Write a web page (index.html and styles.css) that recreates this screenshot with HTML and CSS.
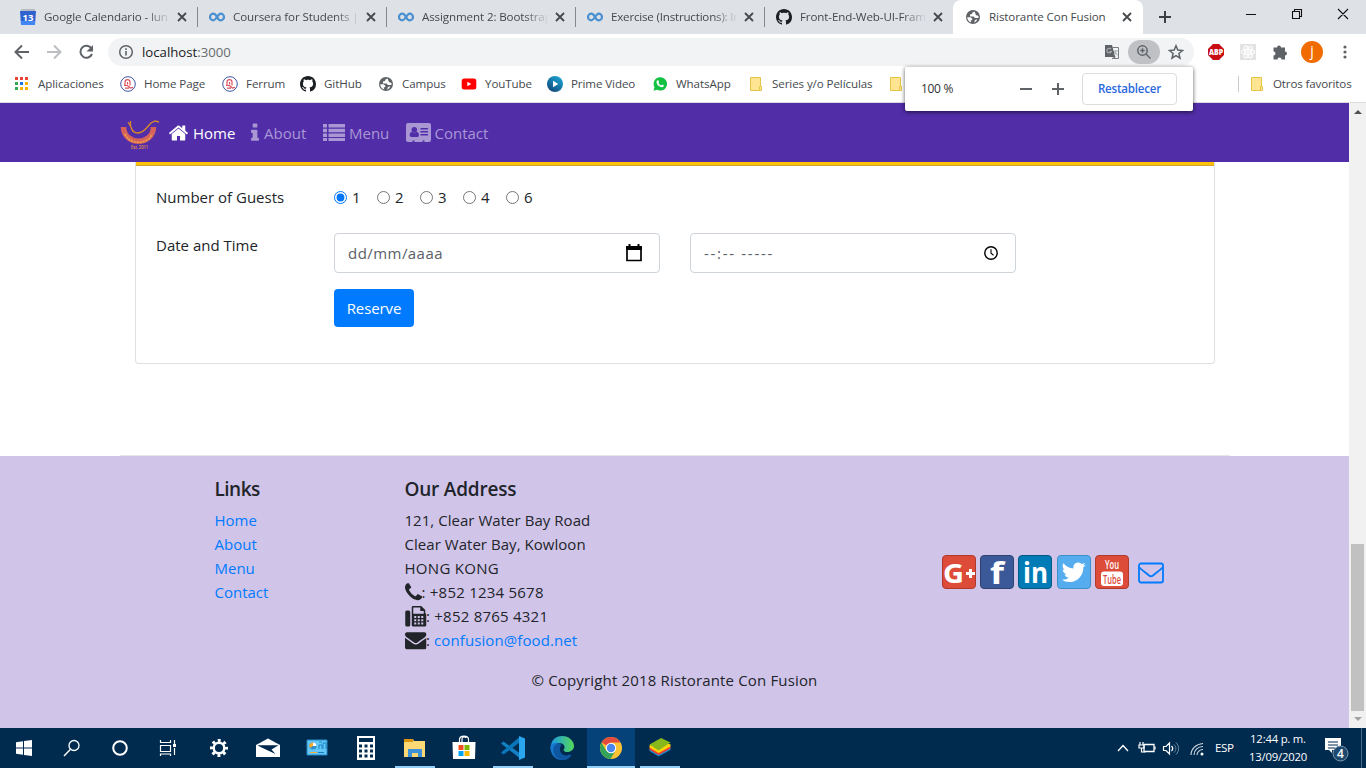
FILE: index.html
```html
<!DOCTYPE html>
<html lang="es">
<head>
<meta charset="utf-8">
<title>Ristorante Con Fusion</title>
<link rel="stylesheet" href="styles.css">
</head>
<body>
<svg class="defs" aria-hidden="true">
  <symbol id="infinity" viewBox="0 0 16 16"><path d="M8 8C6.700 5.500 5.700 4.700 4.300 4.700a3.300 3.300 0 0 0 0 6.600c3 0 4.400-6.600 7.400-6.600a3.300 3.300 0 0 1 0 6.600C10.300 11.300 9.300 10.500 8 8z" fill="none" stroke="#4a90d0" stroke-width="2.200"/></symbol>
  <symbol id="github" viewBox="0 0 16 16"><path fill="#1b1f23" d="M8 0C3.58 0 0 3.58 0 8c0 3.54 2.29 6.53 5.47 7.59.4.07.55-.17.55-.38 0-.19-.01-.82-.01-1.49-2.01.37-2.53-.49-2.69-.94-.09-.23-.48-.94-.82-1.13-.28-.15-.68-.52-.01-.53.63-.01 1.08.58 1.23.82.72 1.21 1.87.87 2.33.66.07-.52.28-.87.51-1.07-1.78-.2-3.64-.89-3.64-3.95 0-.87.31-1.59.82-2.15-.08-.2-.36-1.02.08-2.12 0 0 .67-.21 2.2.82.64-.18 1.32-.27 2-.27s1.36.09 2 .27c1.53-1.04 2.2-.82 2.2-.82.44 1.1.16 1.92.08 2.12.51.56.82 1.27.82 2.15 0 3.07-1.87 3.75-3.65 3.95.29.25.54.73.54 1.48 0 1.07-.01 1.93-.01 2.2 0 .21.15.46.55.38A8.01 8.01 0 0016 8c0-4.42-3.58-8-8-8z"/></symbol>
  <symbol id="globe" viewBox="0 0 16 16"><circle cx="8" cy="8" r="7" fill="#5f6368"/><path d="M9.500 2.500 7.500 3.500 7 5 5 5.500v2h3.500l1.500 1.500h3.300l.4-1.200-.9-1.300-1.800-.3-.6-1.700zM2.200 8.300h3.300l1.800 1.500v1l-1.600 1 .5 1.800A6 6 0 0 1 2.200 8.300zM10 11l2.200-.7-.7 1.700-2.500 1.800z" fill="#fff"/></symbol>
  <symbol id="close" viewBox="0 0 16 16"><path d="M4 4l8 8M12 4l-8 8" stroke="#45494d" stroke-width="1.800"/></symbol>
  <symbol id="crest" viewBox="0 0 16 16"><circle cx="8" cy="8" r="7.300" fill="#fff" stroke="#4055a0"/><path d="M5 9.500V6c0-3.200 5-3.200 5 0v3.500M7.500 8.500V6M4 9.500h3.500l3 2.500 2.500-.7M5 12.200h4" fill="none" stroke="#dc5260" stroke-width="1.200"/></symbol>
  <symbol id="folder" viewBox="0 0 16 16"><path d="M2.500 1.500h10v13h-10z" fill="#ffe592" stroke="#e5c448"/><path d="M11.500 10.500h2v4h-2z" fill="#ffe592" stroke="#e5c448"/></symbol>
  <symbol id="envelope" viewBox="0 0 1792 1792"><path d="M1792 710v794q0 66-47 113t-113 47h-1472q-66 0-113-47t-47-113v-794q44 49 101 87 362 246 497 345 57 42 92.500 65.500t94.500 48 110 24.500h2q51 0 110-24.500t94.500-48 92.500-65.500q170-123 498-345 57-39 100-87zm0-294q0 79-49 151t-122 123q-376 261-468 325-10 7-42.500 31t-54 38-52 32.500-57.500 27-50 9h-2q-23 0-50-9t-57.500-27-52-32.500-54-38-42.500-31q-91-64-262-182.500t-205-142.500q-62-42-117-115.500t-55-136.500q0-78 41.500-130t118.500-52h1472q65 0 112.500 47t47.500 113z"/></symbol>
</svg>

<header class="tabstrip">
  <div class="tab"><svg class="i16" viewBox="0 0 16 16"><path d="M1 0h14v3H1z" fill="#b7bcc4"/><path d="M0 2h16l-1 14H1z" fill="#2f63d0"/><path d="M1 12h14v4H1z" fill="#4285f4"/><text x="8" y="12" text-anchor="middle" font-size="9.500" font-weight="700" fill="#fff">13</text></svg><span class="title">Google Calendario - lun</span><svg class="i16 x"><use href="#close"/></svg></div>
  <div class="tab"><svg class="i16"><use href="#infinity"/></svg><span class="title">Coursera for Students |</span><svg class="i16 x"><use href="#close"/></svg></div>
  <div class="tab"><svg class="i16"><use href="#infinity"/></svg><span class="title">Assignment 2: Bootstrap</span><svg class="i16 x"><use href="#close"/></svg></div>
  <div class="tab"><svg class="i16"><use href="#infinity"/></svg><span class="title tight">Exercise (Instructions): In</span><svg class="i16 x"><use href="#close"/></svg></div>
  <div class="tab last"><svg class="i16"><use href="#github"/></svg><span class="title">Front-End-Web-UI-Fram</span><svg class="i16 x"><use href="#close"/></svg></div>
  <div class="tab active"><svg class="i16"><use href="#globe"/></svg><span class="title full">Ristorante Con Fusion</span><svg class="i16 x"><use href="#close"/></svg></div>
  <svg class="newtab" viewBox="0 0 14 14"><path d="M7 1v12M1 7h12" stroke="#3c4043" stroke-width="2"/></svg>
  <svg class="winctl" viewBox="0 0 110 14"><path d="M0 7.500h10M46.500 4.500h7v7h-7zM48.500 4.500v-2h7v7h-2M92 2l10 10M102 2l-10 10" fill="none" stroke="#111" stroke-width="1.100"/></svg>
</header>

<div class="toolbar">
  <svg class="navicons" viewBox="0 0 108 36"><path d="M29 18H16M22 11.500 15.500 18l6.500 6.500" fill="none" stroke="#5f6368" stroke-width="2"/><path d="M47 18h13M54 11.500l6.500 6.500-6.500 6.500" fill="none" stroke="#bcbec1" stroke-width="2"/><path d="M91.500 14.500a6 6 0 1 0 .5 5.500" fill="none" stroke="#5f6368" stroke-width="2"/><path d="M93 11v6.500h-6.500z" fill="#5f6368"/></svg>
  <div class="omnibox">
    <svg class="i16" viewBox="0 0 16 16"><circle cx="8" cy="8" r="6.300" fill="none" stroke="#5f6368" stroke-width="1.500"/><path d="M8 7v4.500M8 4.300v1.600" stroke="#5f6368" stroke-width="1.600"/></svg>
    <span class="url">localhost<i>:3000</i></span>
    <svg class="i16" viewBox="0 0 16 16"><path d="M1 1h7l3.500 12H1z" fill="#5f6368"/><path d="M9 3.500h5.500v11H8l3.500-1.500" fill="#f1f3f4" stroke="#777b80"/><path d="M7 5.200A2.300 2.300 0 1 0 7.300 7.500H5.500M10 7h4M12 6v1c0 2-1 3-2 4M10.500 8l3 3" fill="none" stroke="#aeb2b6" stroke-width="1.100"/></svg>
    <div class="zoompill"><svg class="i16" viewBox="0 0 16 16"><circle cx="6.500" cy="6.500" r="4.700" fill="none" stroke="#5f6368" stroke-width="1.500"/><path d="M10 10l4.500 4.500M6.500 4.300v4.400M4.300 6.500h4.400" stroke="#5f6368" stroke-width="1.400"/></svg></div>
    <svg class="i16" viewBox="0 0 16 16"><path d="M8 1.800l1.800 4.300 4.700.4-3.600 3 1.100 4.600L8 11.600l-4 2.500 1.100-4.600-3.600-3 4.700-.4z" fill="none" stroke="#5f6368" stroke-width="1.500"/></svg>
  </div>
  <svg class="i16 abp" viewBox="0 0 16 16"><path d="M5 0h6l5 5v6l-5 5H5l-5-5V5z" fill="#c70d12"/><text x="1" y="10.900" font-size="8" font-weight="800" fill="#fff" textLength="14" lengthAdjust="spacingAndGlyphs">ABP</text></svg>
  <svg class="i16 react" viewBox="0 0 16 16"><path d="M0 0h16v16H0z" fill="#e3e3e3"/><g fill="none" stroke="#fff" stroke-width="1.100"><ellipse cx="8" cy="8" rx="6.500" ry="2.500"/><ellipse cx="8" cy="8" rx="6.500" ry="2.500" transform="rotate(60 8 8)"/><ellipse cx="8" cy="8" rx="6.500" ry="2.500" transform="rotate(120 8 8)"/></g><circle cx="8" cy="8" r="1.400" fill="#fff"/></svg>
  <svg class="i16 puzzle" viewBox="0 0 16 16"><path d="M1.500 3.500H5a2 2 0 0 1 4 0h4v4a2 2 0 0 1 0 4v4H9.500a2 2 0 0 0-4 0h-4v-4a2 2 0 0 0 0-4z" fill="#5f6368"/></svg>
  <div class="avatar">j</div>
  <svg class="dots" viewBox="0 0 4 16"><circle cx="2" cy="3" r="1.600"/><circle cx="2" cy="8" r="1.600"/><circle cx="2" cy="13" r="1.600"/></svg>
</div>

<nav class="bookmarks">
  <div class="bm b1"><svg class="i16" viewBox="0 0 16 16"><path d="M1 1h3v3H1zM6 1h3v3H6zM11 1h3v3h-3z" fill="#ea4335"/><path d="M1 6h3v3H1zM1 11h3v3H1z" fill="#34a853"/><path d="M6 6h3v3H6z" fill="#1a73e8"/><path d="M11 6h3v3h-3zM6 11h3v3H6zM11 11h3v3h-3z" fill="#fbaf05"/></svg><span>Aplicaciones</span></div>
  <div class="bm b2"><svg class="i16"><use href="#crest"/></svg><span>Home Page</span></div>
  <div class="bm b3"><svg class="i16"><use href="#crest"/></svg><span>Ferrum</span></div>
  <div class="bm b4"><svg class="i16"><use href="#github"/></svg><span>GitHub</span></div>
  <div class="bm b5"><svg class="i16"><use href="#globe"/></svg><span>Campus</span></div>
  <div class="bm b6"><svg class="i16" viewBox="0 0 16 16"><rect x=".7" y="2.500" width="14.600" height="11" rx="2.500" fill="#f00"/><path d="M6.300 5.700v4.600l4-2.300z" fill="#fff"/></svg><span>YouTube</span></div>
  <div class="bm b7"><svg class="i16" viewBox="0 0 16 16"><defs><linearGradient id="pv" x2="0" y2="1" x1=".7"><stop stop-color="#1ba0d0"/><stop offset="1" stop-color="#123e70"/></linearGradient></defs><circle cx="8" cy="8" r="8" fill="url(#pv)"/><path d="M6 4.800v6.400L11.300 8z" fill="#fff"/></svg><span>Prime Video</span></div>
  <div class="bm b8"><svg class="i16" viewBox="0 0 16 16"><path d="M1.500 14.700l1-3.500a6.700 6.700 0 1 1 2.500 2.500z" fill="#13c143"/><path d="M5 4.500l1.300-.3.900 2-.7.900c.6 1.200 1.400 1.900 2.600 2.400l.9-.9 1.900 1c0 1.200-1.100 1.800-2.100 1.700C7 11 4.300 8 4.500 5.800z" fill="#fff"/></svg><span>WhatsApp</span></div>
  <div class="bm b9"><svg class="i16"><use href="#folder"/></svg><span>Series y/o Películas</span></div>
  <div class="bm b10"><svg class="i16"><use href="#folder"/></svg></div>
  <div class="bm other"><svg class="i16"><use href="#folder"/></svg><span>Otros favoritos</span></div>
</nav>

<aside class="zoom"><span>100 %</span><svg viewBox="0 0 46 14"><path d="M0 7h12M32 7h12M38 1v12" stroke="#5f6368" stroke-width="2"/></svg><button>Restablecer</button></aside>

<div class="viewport">
  <main class="page">
    <nav class="navbar">
      <svg class="logo" viewBox="0 0 40 30"><path d="M3.500 7C4 26 33 26 33.500 7" fill="none" stroke="#d5635c" stroke-width="5.500"/><path d="M5 14c4 11 23 11 27 0" fill="none" stroke="#ecab48" stroke-width="1.500" stroke-dasharray="2 1"/><path d="M8 2l3 5c1 5 4 6 7 6 6 0 9-6 13-10l4-2 4 1M10.500 1v6" fill="none" stroke="#d78a25" stroke-width="1.300"/><text x="11" y="29" font-size="5" font-weight="600" fill="#ee963b" textLength="17" lengthAdjust="spacingAndGlyphs">Est. 2011</text></svg>
      <a class="on n1"><svg viewBox="0 0 1792 1792"><path d="M1472 992v480q0 26-19 45t-45 19h-384v-384h-256v384h-384q-26 0-45-19t-19-45v-480q0-1 .5-3t.5-3l575-474 575 474q1 2 1 6zm223-69l-62 74q-8 9-21 11h-3q-13 0-21-7l-692-577-692 577q-12 8-24 7-13-2-21-11l-62-74q-8-10-7-23.500t11-21.500l719-599q32-26 76-26t76 26l244 204v-195q0-14 9-23t23-9h192q14 0 23 9t9 23v408l219 182q10 8 11 21.500t-7 23.500z"/></svg><span>Home</span></a>
      <a class="n2"><svg viewBox="576 0 640 1792"><path d="M1216 1344v128q0 26-19 45t-45 19h-512q-26 0-45-19t-19-45v-128q0-26 19-45t45-19h64v-384h-64q-26 0-45-19t-19-45v-128q0-26 19-45t45-19h384q26 0 45 19t19 45v576h64q26 0 45 19t19 45zm-128-1152v192q0 26-19 45t-45 19h-256q-26 0-45-19t-19-45v-192q0-26 19-45t45-19h256q26 0 45 19t19 45z"/></svg><span>About</span></a>
      <a class="n3"><svg viewBox="0 0 22 22"><path d="M0 2h4v3.500H0zM5.500 2H22v3.500H5.500zM0 6.700h4v3.500H0zM5.500 6.700H22v3.500H5.500zM0 11.400h4v3.500H0zM5.500 11.400H22v3.500H5.500zM0 16.100h4v3H0zM5.500 16.100H22v3H5.500z"/></svg><span>Menu</span></a>
      <a class="n4"><svg viewBox="0 0 25 22"><path fill-rule="evenodd" d="M2 1h21q2 0 2 2v15q0 2-2 2h-4.500v-1.500h-2V20h-8v-1.500h-2V20H2q-2 0-2-2V3q0-2 2-2zM8.300 5a2.700 2.700 0 1 0 0 5.500 2.700 2.700 0 1 0 0-5.500zM6 9.800c-2 .2-2.300 2.200-2.300 3.800q0 1.400 1.500 1.400h6.200q1.500 0 1.500-1.400c0-1.600-.3-3.600-2.300-3.800-1.200 1.200-3.400 1.200-4.600 0zM14.500 6v1.500H22V6zM14.500 9v1.500H22V9zM14.500 12v1.500H22V12z"/></svg><span>Contact</span></a>
    </nav>
    <section class="card">
      <div class="row guests"><label>Number of Guests</label><div class="radios"><label><input type="radio" name="g" checked>1</label><label><input type="radio" name="g">2</label><label><input type="radio" name="g">3</label><label><input type="radio" name="g">4</label><label><input type="radio" name="g">6</label></div></div>
      <div class="row when"><label>Date and Time</label>
        <div class="field"><span class="date">dd/mm/aaaa</span><svg class="cal" viewBox="0 0 18 20"><path d="M2 4h14v13.500H2z" fill="none" stroke="#000" stroke-width="1.700"/><path d="M1 3h16v4H1zM3.500 1h2v3h-2zM12.500 1h2v3h-2z"/></svg></div>
        <div class="field"><span class="time">--:-- -----</span><svg class="clock" viewBox="0 0 16 16"><circle cx="8" cy="8" r="6.200" fill="none" stroke="#000" stroke-width="1.400"/><path d="M8 4.300V8.200l2.500 2" fill="none" stroke="#000" stroke-width="1.100"/></svg></div>
      </div>
      <button class="reserve">Reserve</button>
    </section>
    <hr>
    <footer class="footer">
      <div class="cols">
        <div class="links"><h5>Links</h5><a>Home</a><a>About</a><a>Menu</a><a>Contact</a></div>
        <address><h5>Our Address</h5>
          <p><span>121, Clear Water Bay Road</span></p><p><span>Clear Water Bay, Kowloon</span></p><p><span class="hk">HONG KONG</span></p>
          <p><svg class="ph" viewBox="192 192 1408 1408"><path d="M1600 1240q0 27-10 70.500t-21 68.500q-21 50-122 106-94 51-186 51-27 0-53-3.500t-57-12.500-47-14.500-55.500-20.500-49.500-18q-98-35-175-83-127-79-264-216t-216-264q-48-77-83-175-3-9-18-49.500t-20.500-55.500-14.500-47-12.500-57-3.500-53q0-92 51-186 56-101 106-122 25-11 68.500-21t70.500-10q14 0 21 3 18 6 53 76 11 19 30 54t35 63.500 31 53.500q3 4 17.500 25t21.500 35.500 7 28.500q0 20-28.500 50t-62 55-62 53-28.500 46q0 9 5 22.500t8.500 20.500 14 24 11.500 19q76 137 174 235t235 174q2 1 19 11.500t24 14 20.500 8.500 22.500 5q18 0 46-28.500t53-62 55-62 50-28.500q14 0 28.500 7t35.500 21.500 25 17.500q25 15 53.500 31t63.500 35 54 30q70 35 76 53 3 7 3 21z"/></svg><span class="tel">: +852 1234 5678</span></p>
          <p><svg class="fx" viewBox="0 0 21 21"><path fill-rule="evenodd" d="M1.500 4.500h2Q5 4.500 5 6v13q0 1.500-1.500 1.500h-2Q0 20.500 0 19V6q0-1.500 1.500-1.500zM6.500 1.300Q6.500 0 7.800 0H16l4 4v3q1 .5 1 2v10q0 1.500-1.500 1.500H8q-1.500 0-1.500-1.500zM8 1.500v6.200h10.500V5H15V1.500zM9 10v2h2v-2zM12.500 10v2h2v-2zM16 10v2h2v-2zM9 13.300v2h2v-2zM12.500 13.300v2h2v-2zM16 13.300v2h2v-2zM9 16.600v2h2v-2zM12.500 16.600v2h2v-2zM16 16.600v2h2v-2z"/></svg><span class="tel">: +852 8765 4321</span></p>
          <p><svg class="ev"><use href="#envelope"/></svg><span class="mail">: <a>confusion@food.net</a></span></p>
        </address>
        <div class="social">
          <svg class="s" viewBox="0 0 34 34"><rect x=".5" y=".5" width="33" height="33" rx="3.500" fill="#dd4b39" stroke="#b1392a"/><text x="1" y="27.500" font-size="27" font-weight="700" fill="#fff" textLength="21" lengthAdjust="spacingAndGlyphs">G</text><path d="M24 18.500h9M28.500 14v9" stroke="#fff" stroke-width="3"/></svg>
          <svg class="s" viewBox="0 0 34 34"><rect x=".5" y=".5" width="33" height="33" rx="3.500" fill="#3b5998" stroke="#2d4373"/><text x="10" y="28.500" font-size="31" font-weight="700" fill="#fff" textLength="14" lengthAdjust="spacingAndGlyphs">f</text></svg>
          <svg class="s" viewBox="0 0 34 34"><rect x=".5" y=".5" width="33" height="33" rx="3.500" fill="#007bb6" stroke="#005983"/><text x="5" y="28" font-size="28" font-weight="700" fill="#fff" textLength="25" lengthAdjust="spacingAndGlyphs">in</text></svg>
          <svg class="s tw" viewBox="0 0 34 34"><rect x=".5" y=".5" width="33" height="33" rx="3.500" fill="#55acee" stroke="#3d8fc8"/><path transform="translate(3 3.500) scale(.0153)" fill="#fff" d="M1684 408q-67 98-162 167 1 14 1 42 0 130-38 259.500t-115.500 248.500-184.500 210.500-258 146-323 54.500q-271 0-496-145 35 4 78 4 225 0 401-138-105-2-188-64.500t-114-159.500q33 5 61 5 43 0 85-11-112-23-185.500-111.500t-73.500-205.500v-4q68 38 146 41-66-44-105-115t-39-154q0-88 44-163 121 149 294.500 238.500t371.500 99.500q-8-38-8-74 0-134 94.500-228.500t228.500-94.500q140 0 236 102 109-21 205-78-37 115-142 178 93-10 186-50z"/></svg>
          <svg class="s" viewBox="0 0 34 34"><rect x=".5" y=".5" width="33" height="33" rx="3.500" fill="#dd4b39" stroke="#b1392a"/><text x="10" y="14" font-size="12.500" font-weight="600" fill="#fff" textLength="14" lengthAdjust="spacingAndGlyphs">You</text><rect x="6" y="16.500" width="22" height="14.500" rx="3" fill="#fff"/><text x="8" y="28.500" font-size="12.500" font-weight="600" fill="#dd4b39" textLength="18" lengthAdjust="spacingAndGlyphs">Tube</text></svg>
          <svg class="mailo" viewBox="0 0 26 21"><rect x="1" y="1" width="24" height="19" rx="2" fill="none" stroke="#007bff" stroke-width="1.800"/><path d="M1.500 5c3 3.500 7 5.500 9.500 8q2 1.500 4 0c2.500-2.500 6.500-4.500 9.500-8" fill="none" stroke="#007bff" stroke-width="1.800"/></svg>
        </div>
      </div>
      <p class="copy"><span>© Copyright 2018 Ristorante Con Fusion</span></p>
    </footer>
  </main>
  <div class="scrollbar"><i class="up"></i><div class="thumb"></div><i class="down"></i></div>
</div>

<div class="taskbar">
  <div class="t"><svg viewBox="0 0 24 24"><path d="M4 6.300l7-1v6.200H4zM12 5.100L20 4v7.500h-8zM4 12.500h7v6.200l-7-1zM12 12.500h8V20l-8-1.100z" fill="#fff"/></svg></div>
  <div class="t"><svg viewBox="0 0 24 24"><circle cx="14" cy="9.500" r="5" fill="none" stroke="#fff" stroke-width="1.300"/><path d="M10.500 13.200L4 20" stroke="#fff" stroke-width="1.400"/></svg></div>
  <div class="t"><svg viewBox="0 0 24 24"><circle cx="12" cy="12" r="6.800" fill="none" stroke="#fff" stroke-width="2"/></svg></div>
  <div class="t"><svg viewBox="0 0 24 24"><path d="M4.500 4v2.500h10V4M4.500 9.500h10v6h-10zM4.500 20v-2h10v2M18.500 4v4M18.500 12v7" fill="none" stroke="#fff" stroke-width="1.200"/><path d="M17 8h3v3h-3z" fill="#fff"/></svg></div>
  <div class="t wide first"><svg viewBox="0 0 24 24"><circle cx="12" cy="12" r="5.300" fill="none" stroke="#fff" stroke-width="2.500"/><circle cx="12" cy="12" r="7.500" fill="none" stroke="#fff" stroke-width="3" stroke-dasharray="2.900 2.990" stroke-dashoffset="1.450"/></svg></div>
  <div class="t wide"><svg viewBox="0 0 24 24"><path d="M0 9l12-6.500L24 9v12H0z" fill="#fff"/><path d="M1.500 9.300h21L15.500 13.500l4 4.500L4 10.800z" fill="#00294d"/></svg></div>
  <div class="t wide"><svg viewBox="0 0 24 24"><path d="M2 4h20v15H2z" fill="#65c7f8" stroke="#278ac6"/><circle cx="8" cy="10" r="3.500" fill="#2b8fd0"/><path d="M8 10V6.500A3.500 3.500 0 0 1 11.500 10z" fill="#fff"/><path d="M8 10V6.500A3.500 3.500 0 0 0 5 12z" fill="#f9a829"/><path d="M14 13V9h3v4M18 13V7h3v6M14 6h3" fill="none" stroke="#1d84c6"/><path d="M5 16.500h7" stroke="#f7b13b"/><path d="M13 16.500h6" stroke="#147fbb"/></svg></div>
  <div class="t wide"><svg viewBox="0 0 24 24"><path fill-rule="evenodd" d="M3 0h18v24H3zM5 2v4h14V2zM5 8.500v3h3v-3zM10.500 8.500v3h3v-3zM16 8.500v3h3v-3zM5 13.500v3h3v-3zM10.500 13.500v3h3v-3zM16 13.500v3h3v-3zM5 18.500v3h3v-3zM10.500 18.500v3h3v-3zM16 18.500v3h3v-3z" fill="#fff"/></svg></div>
  <div class="t wide run"><svg viewBox="0 0 24 24"><path d="M1 3h9l1 2h11v16H1z" fill="#fdd874"/><path d="M1 3h9v3H1z" fill="#d9950c"/><path d="M5 21v-8h14v8h-4v-4H9v4z" fill="#3f91d8"/></svg></div>
  <div class="t wide"><svg viewBox="0 0 24 24"><path d="M7.500 6V3.500C7.500-1 16.500-1 16.500 3.500V6M10 6V3c0-2 3-3 4-1" fill="none" stroke="#fff" stroke-width="1.200"/><path d="M.5 6h23l-.5 17H1z" fill="#fff"/><path d="M6.500 9h5v5h-5z" fill="#f04e23"/><path d="M12.500 9h5v5h-5z" fill="#7eb900"/><path d="M6.500 15h5v5h-5z" fill="#00a3ee"/><path d="M12.500 15h5v5h-5z" fill="#feb800"/></svg></div>
  <div class="t wide run"><svg viewBox="0 0 24 24"><path d="M0 7.500l2.500-2L18.500 17v5z" fill="#1380c4"/><path d="M0 16.500l2.500 2L18.500 6.500V1z" fill="#0876b9"/><path d="M18 0l6 2.500v19L18 24z" fill="#2aa6ef"/></svg></div>
  <div class="t wide"><svg viewBox="0 0 24 24"><defs><linearGradient id="eg"><stop stop-color="#1c9ae5"/><stop offset="1" stop-color="#55d958"/></linearGradient></defs><path d="M1 9C2 3 7 0 12 0c7 0 12 5 12 10 0 4-4 6-7 6s-4-2-3-3c2-3-1-6-5-6-3 0-6 1-8 4z" fill="url(#eg)"/><path d="M.3 10C2 7 6 6 9 7c-3 2-4 8 0 11 4 3 9 2 12 .500C19 22 16 24 12 24 5 24 0 18 .3 10z" fill="#1678cf"/><path d="M9 7c-5 1-7 6-5 11 2 4 6 6 9 6 4 0 7-2 8.500-5-4 1.500-9 1-11-3-1-2-1-5 1-7z" fill="#0f56a1"/></svg></div>
  <div class="t wide run current"><svg viewBox="0 0 24 24"><circle cx="12" cy="12" r="11" fill="#fbc334"/><path d="M12 12L2.500 6.500A11 11 0 0 1 21.500 6.500H12z" fill="#e44b3d"/><path d="M2.500 6.500A11 11 0 0 0 11.500 23l5-8.500L7 14.500z" fill="#34a35a"/><circle cx="12" cy="12" r="5.200" fill="#fff"/><circle cx="12" cy="12" r="4.200" fill="#4a86f0"/></svg></div>
  <div class="t wide run"><svg viewBox="0 0 24 24"><path d="M1.500 13l11-5 10 4v2l-12 6.500-9-5.500z" fill="#1b8ac9"/><path d="M1.500 11.500l11-5 10 4v2l-12 6.500-9-5.500z" fill="#ef3e32"/><path d="M1.500 9.500l11-5 10 4v2l-12 6.500-9-5.500z" fill="#fdd406"/><path d="M1.500 8.500L13 2l9.500 4.500-12 8z" fill="#86b81c"/></svg></div>
  <div class="tray">
    <svg viewBox="0 0 90 20"><path d="M1 13l5-5.500 5 5.500M27 6.500h10v7H27z" fill="none" stroke="#fff" stroke-width="1.300"/><path d="M23 4v3M26 4v3M22 7h5v3h-5zM24.500 10v4h4M38 8.500v3" fill="none" stroke="#fff" stroke-width="1.200"/><path d="M46.500 8.500H49l3.500-3.500v11L49 12.500h-2.500zM54.500 8c1.500 1.500 1.500 3.500 0 5" fill="none" stroke="#fff" stroke-width="1.200"/><path d="M57 6.500c2.500 2.500 2.500 5.500 0 8M59 4.500c3.500 3.500 3.500 8.500 0 12" fill="none" stroke="#718ba2"/><path d="M74 17C74 11 79 6 86 5.500M77 17c0-5 4-8.500 9-8.500M80 17c0-3 3-5.500 6-5.500" fill="none" stroke="#d4dce3" stroke-width="1.100"/><circle cx="85" cy="16" r="1.500" fill="#fff"/></svg>
    <span class="esp">ESP</span>
    <div class="time2"><span>12:44 p. m.</span><span>13/09/2020</span></div>
    <svg class="note" viewBox="0 0 25 26"><path d="M0 1h16v12H7v3l-3-3H0z" fill="#fff"/><path d="M3 5h10M3 8h10M3 11h7" stroke="#00294d"/><circle cx="15.500" cy="16.500" r="7.500" fill="#1d496f" stroke="#8097ab"/><text x="15.500" y="21" text-anchor="middle" font-size="12" font-weight="600" fill="#fff">4</text></svg>
  </div>
</div>
</body>
</html>
```
FILE: styles.css
```css
*{box-sizing:border-box}
body{margin:0;width:1366px;height:768px;overflow:hidden;display:flex;flex-direction:column;font-family:"Open Sans","Noto Sans",sans-serif;background:#fff;position:relative}
svg{display:block;flex:none;overflow:visible}
span{white-space:nowrap}
.defs{position:absolute;width:0;height:0}
.i16{width:16px;height:16px}
h5,p,hr{margin:0}

.tabstrip{height:34px;background:#dee1e6;display:flex;padding-left:8px;flex:none}
.tab{width:189px;height:34px;display:flex;align-items:center;padding:0 0 0 12px;position:relative;flex:none}
.tab:not(.last):not(.active)::after{content:"";position:absolute;right:-1px;top:7px;width:1px;height:20px;background:#84878b}
.title{width:130px;margin-left:8px;font-size:11.6px;line-height:18px;color:#45494d;letter-spacing:-.12px;-webkit-mask-image:linear-gradient(to right,#000 102px,transparent 127px)}
.tight{letter-spacing:-.2px}
.title.full{-webkit-mask-image:none;letter-spacing:-.1px}
.tab.active{background:#fff;border-radius:8px 8px 0 0;width:190px;height:34px}
.newtab{width:14px;height:14px;margin:10px 0 0 15px}
.winctl{width:110px;height:14px;margin:7px 0 0 74px}

.toolbar{height:36px;display:flex;align-items:center;flex:none}
.navicons{width:108px;height:36px}
.omnibox{width:1086px;height:28px;border-radius:14px;background:#f1f3f4;display:flex;align-items:center;padding:0 10px;flex:none}
.url{font-size:13.2px;color:#202124;margin-left:8px;width:962px}
.url i{font-style:normal;color:#686c70}
.zoompill{width:32px;height:24px;border-radius:12px;background:#bfc1c4;padding:4px 8px;margin:0 8px}
.abp{margin-left:14px}
.react{margin-left:16px}
.puzzle{margin-left:16px}
.avatar{width:22px;height:22px;border-radius:50%;background:#f06c00;color:#fff;font-size:14px;line-height:19px;text-align:center;margin-left:13px}
.dots{width:4px;height:16px;margin-left:20px;fill:#5f6368}

.bookmarks{height:33px;border-bottom:1px solid #dadce0;display:flex;padding-left:14px;flex:none}
.bm{display:flex;align-items:center;gap:8px;font-size:11.6px;color:#45494d;height:28px;letter-spacing:-.1px}
.bm span{margin-top:-2px}
.b1{width:106px}.b2{width:102px}.b3{width:78px}.b4{width:78px}.b5{width:83px}.b6{width:86px}.b7{width:105px}.b8{width:96px}.b9{width:140px}.b10{width:350px}
.other{border-left:1px solid #c8cacd;height:16px;margin-top:6px;padding-left:10px;letter-spacing:-.15px}

.zoom{position:absolute;left:905px;top:67px;width:288px;height:44px;background:#fff;border-radius:2px;box-shadow:0 1px 4px rgba(0,0,0,.65);display:flex;align-items:center;padding-left:16px;font-size:12px;color:#333;z-index:2}
.zoom span{width:99px;letter-spacing:-.3px;margin-top:-1px}
.zoom svg{width:46px;height:14px}
.zoom button{margin-left:16px;width:95px;height:32px;border:1px solid #dadce0;border-radius:4px;background:#fff;color:#2a69df;font:600 11.600px "Open Sans",sans-serif;padding:0 0 2px;letter-spacing:-.22px}

.viewport{display:flex;height:625px;flex:none}
.page{width:1349px;display:flex;flex-direction:column}
.navbar{height:59px;background:#512da8;display:flex;align-items:center;padding-left:120px;padding-top:2px;font-size:15px;color:#a997d4;flex:none}
.logo{width:40px;height:30px;margin:2px 8px 0 0}
.navbar a{display:flex;align-items:center;gap:4px;fill:currentColor}
.navbar a svg{height:22px;margin-top:-1px}
.navbar a span{margin-top:-2px}
.navbar .on{color:#fff}
.n1{width:83px}.n1 svg{width:21px}
.n2{width:72px}.n2 svg{width:8px}
.n2 span{margin-left:1px}
.n3{width:83px}.n3 svg{width:22px}
.n4 svg{width:25px}
.n4 span{margin-left:-.5px}
.card{width:1080px;height:202px;margin-left:135px;border:1px solid #dedfe0;border-top:0;border-radius:0 0 4px 4px;padding-left:20px;font-size:15px;color:#212529;flex:none}
.card::before{content:"";display:block;height:3px;margin-left:-20px;background:#ffc107;border-bottom:1px solid #d0a62d}
.row{display:flex}
.row>label{width:178px}
.guests{height:68px;padding-top:20px;line-height:22px}
.radios{display:flex;height:22px}
.radios label{display:flex;align-items:center;width:43px;gap:5px;height:22px}
.radios input{width:13px;height:13px;margin:0;accent-color:#0075ff}
.when{height:40px}
.when>label{line-height:24px}
.field{width:326px;height:40px;border:1px solid #ced4da;border-radius:4px;margin:0 30px 0 0;display:flex;align-items:center;justify-content:space-between;padding:0 16px 0 13px;color:#5a6066}
.field span{margin-top:-1px}
.date{letter-spacing:.45px}
.time{letter-spacing:1.7px}
.cal{width:18px;height:20px}
.clock{width:16px;height:16px}
.reserve{margin:16px 0 0 178px;width:80px;height:38px;border:0;border-radius:4px;background:#007bff;color:#fff;font:15px "Open Sans",sans-serif;padding:0;display:block;letter-spacing:-.1px}
.card .guests{height:67px}
.page hr{margin:91px 0 0 120px;width:1110px;height:1px;border:0;background:#e6e6e6}
.footer{background:#d1c4e9;height:272px;padding-top:21px;font-size:15px;line-height:24px;color:#212529}
.cols{display:flex;height:178px}
.links{margin-left:214.5px;width:190px}
.links a{display:block}
.footer a{color:#007bff}
h5{font-size:19px;line-height:24px;font-weight:600;margin-bottom:7px;height:24px;letter-spacing:-.2px}
.links h5{letter-spacing:-.5px}
address{width:537.5px;font-style:normal}
address p{display:flex;align-items:center;height:24px;fill:#212529}
address p span{letter-spacing:.04px}
address p .hk{letter-spacing:.3px}
address p .tel{letter-spacing:.23px}
address p .mail{letter-spacing:.1px}
.ph{width:17px;height:17px}
.fx{width:21.500px;height:21px}
.ev{width:21.500px;height:22px}
.social{display:flex;align-items:center;height:34px;margin-top:78px}
.s{width:34px;height:34px;margin-right:4px}
.tw{margin-left:1px}
.mailo{width:26px;height:22px;margin-left:5px;margin-top:2px}
.copy{text-align:center;height:24px;margin-top:13px;letter-spacing:.16px}
.scrollbar{width:17px;background:#f1f1f1;display:flex;flex-direction:column;align-items:center}
.up{border:4px solid transparent;border-top:0;border-bottom:4px solid #505050;margin-top:7px}
.thumb{width:13px;height:167px;background:#c1c1c1;margin-top:430px}
.down{border:4px solid transparent;border-bottom:0;border-top:4px solid #a3a3a3;margin-top:6px}

.taskbar{height:40px;background:#002b4f;display:flex;flex:none}
.t{width:48px;height:40px;display:flex;align-items:center;justify-content:center;position:relative;flex:none}
.t svg{width:24px;height:24px}
.wide{width:49px}
.wide:not(.current) svg{margin-left:-2px}
.first{margin-left:3px}
.run::after{content:"";position:absolute;left:4px;width:40px;bottom:0;height:2px;background:#91cdf5}
.current{background:#05427a;width:48px;margin-right:1px}
.current::after{left:0;width:48px}
.tray{display:flex;align-items:center;color:#fff;margin-left:auto;width:249px;height:40px}
.tray>svg:first-child{width:90px;height:20px}
.esp{font-size:11.600px;width:34px;margin:-2px 0 0 8px;letter-spacing:-.4px}
.time2{display:flex;flex-direction:column;align-items:center;width:58px;font-size:11.300px;line-height:18px;letter-spacing:-.2px;margin:-1px 0 0 0}
.note{width:25px;height:26px;margin:3px 0 0 18px}
.tray::after{content:"";width:1px;height:40px;background:#476985;margin-left:11px}
```
